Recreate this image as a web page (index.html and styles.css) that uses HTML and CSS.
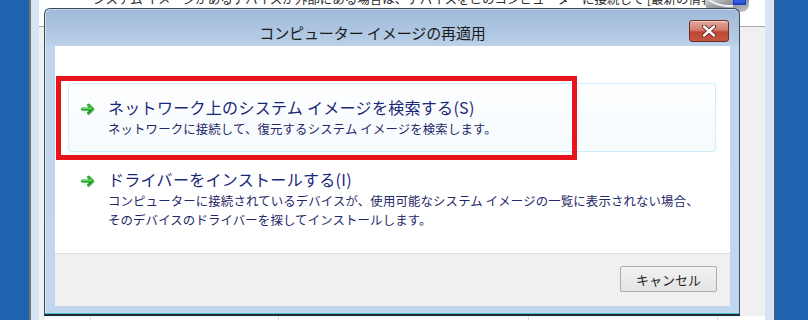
FILE: index.html
```html
<!DOCTYPE html>
<html lang="ja">
<head>
<meta charset="utf-8">
<title>コンピューター イメージの再適用</title>
<link rel="stylesheet" href="styles.css">
</head>
<body>
<div class="desktop">
  <div class="parent">
    <div class="parent-body">
      <div class="parent-head">
        <div class="parent-text">システム イメージがあるデバイスが外部にある場合は、デバイスをこのコンピューターに接続して [最新の情報</div>
        <svg class="parent-icon" width="48" height="16" viewBox="0 0 48 16">
          <defs>
            <linearGradient id="pg" x1="0" y1="0" x2="1" y2="1">
              <stop offset="0" stop-color="#d8dadc"/>
              <stop offset="0.5" stop-color="#8d9296"/>
              <stop offset="1" stop-color="#c4c7ca"/>
            </linearGradient>
          </defs>
          <path d="M2 0 H46 V6 Q46 13 38 14 H12 Q3 13 2 6 Z" fill="url(#pg)"/>
          <path d="M6 2 Q16 9 30 8" stroke="#eef0f1" stroke-width="2" fill="none"/>
          <rect x="30" y="0" width="13" height="7" fill="#1d3fc0"/>
          <rect x="31" y="0" width="11" height="5" fill="#2f5de0"/>
        </svg>
      </div>
      <div class="parent-main"></div>
      <div class="parent-list">
        <span class="col c1"></span><span class="col c2"></span><span class="col c3"></span><span class="col c4"></span><span class="col c5"></span>
      </div>
    </div>
  </div>
</div>

<div class="dialog">
  <div class="caption">
    <div class="caption-title">コンピューター イメージの再適用</div>
    <div class="close-btn">
      <svg width="16" height="12" viewBox="0 0 16 12">
        <path d="M3 1.5 L13 10.5 M13 1.5 L3 10.5" stroke="#5a2420" stroke-width="4.2" stroke-linecap="round"/>
        <path d="M3 1.5 L13 10.5 M13 1.5 L3 10.5" stroke="#ffffff" stroke-width="2.4" stroke-linecap="round"/>
      </svg>
    </div>
  </div>
  <div class="client">
    <div class="content">
      <div class="cmd cmd-hover">
        <svg class="arrow" width="16" height="14" viewBox="0 0 16 14">
          <path d="M2.5 7 H12 M8.5 3 L12.5 7 L8.5 11" stroke="#a8b4a8" stroke-width="3.6" stroke-linecap="round" stroke-linejoin="round" fill="none" opacity="0.45" transform="translate(0.6 0.8)"/>
          <path d="M2.5 7 H12 M8.5 3 L12.5 7 L8.5 11" stroke="#1fa51f" stroke-width="3" stroke-linecap="round" stroke-linejoin="round" fill="none"/>
          <path d="M3 6.5 H11.5 M9 3.5 L11.5 6" stroke="#6ede6a" stroke-width="1" stroke-linecap="round" fill="none"/>
        </svg>
        <div class="cmd-text">
          <div class="cmd-title">ネットワーク上のシステム イメージを検索する(S)</div>
          <div class="cmd-note">ネットワークに接続して、復元するシステム イメージを検索します。</div>
        </div>
      </div>
      <div class="cmd">
        <svg class="arrow" width="16" height="14" viewBox="0 0 16 14">
          <path d="M2.5 7 H12 M8.5 3 L12.5 7 L8.5 11" stroke="#a8b4a8" stroke-width="3.6" stroke-linecap="round" stroke-linejoin="round" fill="none" opacity="0.45" transform="translate(0.6 0.8)"/>
          <path d="M2.5 7 H12 M8.5 3 L12.5 7 L8.5 11" stroke="#1fa51f" stroke-width="3" stroke-linecap="round" stroke-linejoin="round" fill="none"/>
          <path d="M3 6.5 H11.5 M9 3.5 L11.5 6" stroke="#6ede6a" stroke-width="1" stroke-linecap="round" fill="none"/>
        </svg>
        <div class="cmd-text">
          <div class="cmd-title">ドライバーをインストールする(I)</div>
          <div class="cmd-note">コンピューターに接続されているデバイスが、使用可能なシステム イメージの一覧に表示されない場合、<br>そのデバイスのドライバーを探してインストールします。</div>
        </div>
      </div>
    </div>
    <div class="footer">
      <button class="btn">キャンセル</button>
    </div>
  </div>
</div>

<div class="highlight"></div>
</body>
</html>
```

FILE: styles.css
```css
html, body {
  margin: 0;
  padding: 0;
}
body {
  width: 808px;
  height: 320px;
  overflow: hidden;
  position: relative;
  background: #1f63ae;
  font-family: "Noto Sans CJK JP", "Noto Sans", sans-serif;
}

.desktop {
  display: flex;
  height: 320px;
}
.parent {
  margin-left: 29px;
  width: 746px;
  box-sizing: border-box;
  border-left: 2px solid #707478;
  border-right: 1px solid #5d6268;
  padding: 0 9px 0 8px;
  background: #d7e4f2;
  display: flex;
}
.parent-body {
  flex: 1;
  display: flex;
  flex-direction: column;
  background: #f0f0f0;
}
.parent-head {
  position: relative;
  height: 26px;
  background: #ffffff;
  border-bottom: 1px solid #a9a9a9;
  overflow: hidden;
}
.parent-text {
  margin-top: -9px;
  padding-left: 54px;
  font-size: 12.5px;
  line-height: 16px;
  color: #2a2a2a;
  white-space: nowrap;
}
.parent-icon {
  position: absolute;
  left: 664px;
  top: -2px;
}
.parent-main {
  flex: 1;
}
.parent-list {
  height: 4px;
  display: flex;
  margin-left: 6px;
  background: #ffffff;
}
.col { display: block; height: 4px; }
.c1 { width: 45px; }
.c2 { width: 187px; border-left: 1px solid #dcdcdc; }
.c3 { width: 249px; border-left: 1px solid #dcdcdc; }
.c4 { width: 188px; border-left: 1px solid #dcdcdc; }
.c5 { flex: 1; border-left: 1px solid #dcdcdc; }

/* dialog window */
.dialog {
  position: absolute;
  left: 44px;
  top: 8px;
  width: 696px;
  height: 308px;
  box-sizing: border-box;
  border: 1px solid #3a4b5c;
  border-bottom: 2px solid #1d2a33;
  border-radius: 6px 6px 0 0;
  background: linear-gradient(#9fb9d8 0, #b4cbe5 30px, #c0d6ec 40px, #c2d7ed 100%);
  box-shadow: inset 0 -1px 0 #48c3d6, inset 1px 1px 0 rgba(255,255,255,0.45);
  display: flex;
  flex-direction: column;
}
.caption {
  height: 37px;
  display: flex;
  align-items: flex-start;
}
.caption-title {
  flex: 1;
  text-align: center;
  padding: 14px 0 0 11px;
  font-size: 15px;
  line-height: 20px;
  color: #1b1b1b;
  letter-spacing: -0.1px;
}
.close-btn {
  margin: 11px 10px 0 0;
  width: 40px;
  height: 22px;
  box-sizing: border-box;
  border: 1px solid #6e2c25;
  border-radius: 3px;
  background: linear-gradient(#e3aa9e 0, #d27d6a 45%, #bf4834 55%, #c4573f 100%);
  box-shadow: inset 0 1px 0 rgba(255,255,255,0.45);
  display: flex;
  align-items: center;
  justify-content: center;
}
.client {
  flex: 1;
  margin: 0 9px 8px 10px;
  display: flex;
  flex-direction: column;
}
.content {
  height: 207px;
  background: #ffffff;
  padding: 37px 14px 0 13px;
  box-sizing: border-box;
}
.cmd {
  display: flex;
  align-items: flex-start;
  border: 1px solid transparent;
  border-radius: 3px;
  padding: 11px 12px 12px 11px;
  margin-top: 3px;
}
.cmd-hover {
  margin-top: 0;
  border-color: #cdeefb;
  background: linear-gradient(#fdfeff, #f6fbfe);
}
.arrow {
  flex: none;
  margin-top: 7px;
  margin-right: 12px;
}
.cmd-text {
  white-space: nowrap;
}
.cmd-title {
  font-size: 16px;
  line-height: 25px;
  letter-spacing: 0.3px;
  color: #1a2878;
}
.cmd-note {
  font-size: 12.4px;
  line-height: 19px;
  letter-spacing: 0.15px;
  color: #1f2868;
}
.footer {
  flex: 1;
  border-top: 1px solid #dfdfdf;
  background: #f0f0f0;
  display: flex;
  justify-content: flex-end;
  align-items: flex-start;
  padding: 12px 13px 0 0;
}
.btn {
  width: 97px;
  height: 26px;
  box-sizing: border-box;
  border: 1px solid #adadad;
  border-radius: 2px;
  background: linear-gradient(#f3f3f3, #e3e3e3);
  font-family: "Noto Sans CJK JP", "Noto Sans", sans-serif;
  font-size: 13px;
  color: #1e1e1e;
  padding: 0;
}

/* annotation */
.highlight {
  position: absolute;
  left: 56px;
  top: 76px;
  width: 521px;
  height: 84px;
  box-sizing: border-box;
  border: 5px solid #e8141c;
}
```
